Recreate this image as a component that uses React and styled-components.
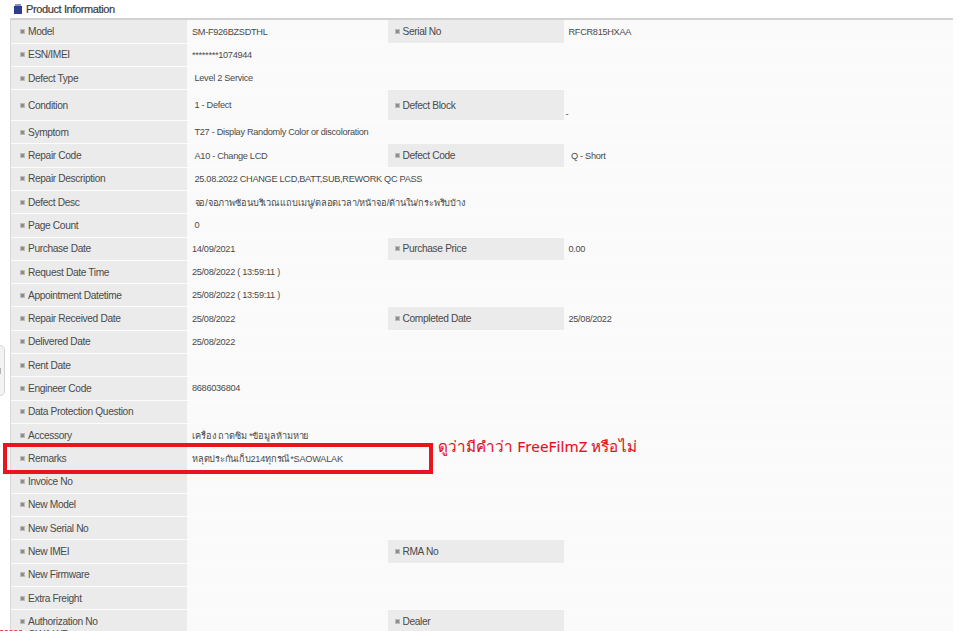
import React from "react";
import styled, { createGlobalStyle } from "styled-components";

const Global = createGlobalStyle`
  html, body { margin: 0; padding: 0; background: #fff; height: 631px; overflow: hidden; }
  body { font-family: "Liberation Sans", Arial, sans-serif; color: #444; }
`;
const Page = styled.div`
  position: relative; width: 965px; height: 631px; overflow: hidden;
  padding: 0 12px 0 10px; box-sizing: border-box;
`;
const Header = styled.div`
  display: flex; align-items: center; gap: 4px; height: 18.4px; padding-left: 4px;
  font-size: 11px; letter-spacing: -0.38px; color: #3a3a3a; -webkit-text-stroke: 0.2px #3a3a3a;
`;
const Book = styled.svg`width: 8px; height: 10px; flex: none;`;
const Table = styled.div`
  border-top: 2px solid #d2d2d2; border-left: 1px solid #d8d8d8;
`;
const Row = styled.div`
  display: grid; grid-template-columns: 176px 200.5px 176px 1fr;
  height: ${p => (p.$tall ? 30.8 : 23.3)}px;
  margin-top: ${p => (p.$peek ? -4.4 : 0)}px;
  box-sizing: border-box; border-bottom: 1.5px solid #fcfcfc; background: #fafafa;
`;
const Label = styled.div`
  display: flex; align-items: ${p => (p.$peek ? "flex-start" : "center")}; gap: 3px;
  padding-left: ${p => (p.$second ? 7 : 9)}px; background: #ebebeb;
  font-size: 10.2px; letter-spacing: -0.36px; color: #4a4a4a;
`;
const Bullet = styled.i`
  width: 5px; height: 5px; flex: none; box-sizing: border-box;
  margin-top: ${p => (p.$peek ? 6 : 0)}px;
  background: #8c8c8c; border: 1px solid #bcbcbc;
`;
const Value = styled.div`
  display: flex; align-items: ${p => (p.$low ? "flex-end" : "center")};
  padding: ${p => (p.$low ? "0 0 1px 2px" : `0 0 0 ${p.$indent ? 7.5 : 5}px`)};
  font-family: "Liberation Sans", "Noto Sans", sans-serif;
  font-size: 9.2px; letter-spacing: ${p => p.$track ?? -0.3}px; color: #4a4a4a; white-space: nowrap;
`;
const Handle = styled.div`
  position: absolute; left: -5px; top: 345px; width: 10px; height: 51px;
  display: flex; align-items: center; justify-content: flex-end; padding-right: 3px;
  box-sizing: border-box; border: 1px solid #d4d4d4; border-radius: 5px; background: #f3f3f3;
`;
const Grip = styled.span`
  width: 2px; height: 6px; background: #b4b4b4;
`;
const Callout = styled.div`
  position: absolute; left: 3px; top: 443px; width: 430px; height: 31px;
  box-sizing: border-box; border: 4px solid #e8141f;
`;
const Note = styled.div`
  position: absolute; left: 438px; top: 435px;
  font-family: "Noto Sans", "Open Sans", sans-serif; font-size: 15.2px; letter-spacing: 0.05px; color: #e3111b;
  -webkit-text-stroke: 0.1px #e3111b; white-space: nowrap;
`;
const Dots = styled.div`
  position: absolute; left: 0; bottom: 0; width: 22px; border-top: 1px dashed #e05050;
`;

const rows = [
  { a: "Model", b: "SM-F926BZSDTHL", c: "Serial No", d: "RFCR815HXAA" },
  { a: "ESN/IMEI", b: "********1074944" },
  { a: "Defect Type", b: "Level 2 Service", indent: true },
  { a: "Condition", b: "1 - Defect", c: "Defect Block", d: "-", indent: true, tall: true, low: true },
  { a: "Symptom", b: "T27 - Display Randomly Color or discoloration", indent: true },
  { a: "Repair Code", b: "A10 - Change LCD", c: "Defect Code", d: "Q - Short", indent: true, di: true },
  { a: "Repair Description", b: "25.08.2022 CHANGE LCD,BATT,SUB,REWORK QC PASS", indent: true },
  { a: "Defect Desc", b: "จอ/จอภาพซ้อนบริเวณแถบเมนู/ตลอดเวลา/หน้าจอ/ด้านใน/กระพริบบ้าง", indent: true, track: -0.12 },
  { a: "Page Count", b: "0", indent: true },
  { a: "Purchase Date", b: "14/09/2021", c: "Purchase Price", d: "0.00" },
  { a: "Request Date Time", b: "25/08/2022 ( 13:59:11 )" },
  { a: "Appointment Datetime", b: "25/08/2022 ( 13:59:11 )" },
  { a: "Repair Received Date", b: "25/08/2022", c: "Completed Date", d: "25/08/2022" },
  { a: "Delivered Date", b: "25/08/2022" },
  { a: "Rent Date" },
  { a: "Engineer Code", b: "8686036804" },
  { a: "Data Protection Question" },
  { a: "Accessory", b: "เครื่อง ถาดซิม *ข้อมูลห้ามหาย", track: -0.1 },
  { a: "Remarks", b: "หลุดประกันเก็บ214ทุกรณี*SAOWALAK", track: -0.23 },
  { a: "Invoice No" },
  { a: "New Model" },
  { a: "New Serial No" },
  { a: "New IMEI", c: "RMA No" },
  { a: "New Firmware" },
  { a: "Extra Freight" },
  { a: "Authorization No", c: "Dealer" },
  { a: "OWA WP", peek: true },
];

export default function App() {
  return (
    <Page>
      <Global />
      <Header>
        <Book viewBox="0 0 8 10">
          <path d="M1 0h6v2H1z" fill="#8a93c4" />
          <path d="M0 2h8v8H0z" fill="#2f3d8f" />
        </Book>
        Product Information
      </Header>
      <Table>
        {rows.map(r => (
          <Row key={r.a} $tall={r.tall} $peek={r.peek}>
            <Label $peek={r.peek}><Bullet $peek={r.peek} />{r.a}</Label>
            <Value $indent={r.indent} $track={r.track}>{r.b}</Value>
            {r.c ? <Label $second><Bullet />{r.c}</Label> : <span />}
            {r.c ? <Value $indent={r.di} $low={r.low}>{r.d}</Value> : <span />}
          </Row>
        ))}
      </Table>
      <Handle><Grip /></Handle>
      <Callout />
      <Note>ดูว่ามีคำว่า FreeFilmZ หรือไม่</Note>
      <Dots />
    </Page>
  );
}
